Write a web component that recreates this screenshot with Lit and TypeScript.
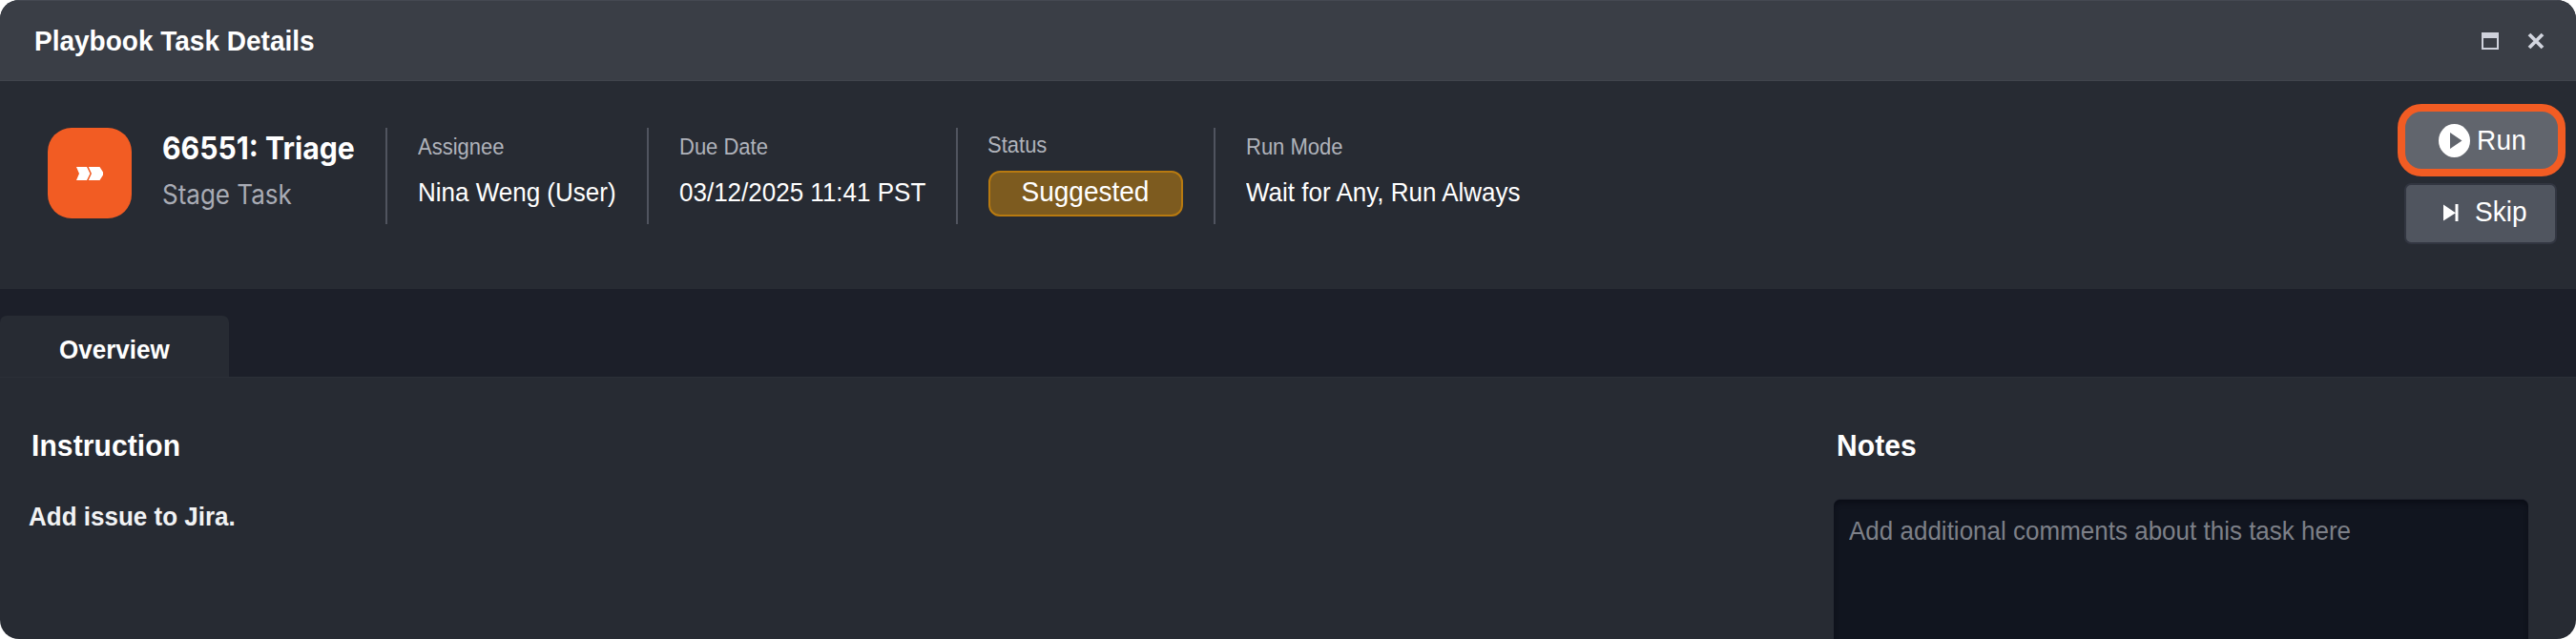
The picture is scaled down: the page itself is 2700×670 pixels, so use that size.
import { LitElement, html, css } from "lit";
import { customElement, property } from "lit/decorators.js";

/** Labelled value in the task summary strip. */
@customElement("task-field")
class TaskField extends LitElement {
  @property() label = "";
  static styles = css`
    :host {
      display: block;
      box-sizing: border-box;
      height: 101px;
      border-left: 2px solid #50545f;
      padding: 6px 0 0 32px;
      white-space: nowrap;
    }
    .label {
      font-size: 22px;
      line-height: 30px;
      color: #b0b3bb;
      transform: scaleY(1.07);
    }
    .value {
      margin-top: 16px;
      font-size: 26px;
      line-height: 30px;
      color: #fff;
      transform: scaleY(1.07);
    }
    :host([badge]) {
      padding-top: 4px;
      padding-left: 31px;
    }
    :host([badge]) .value {
      margin-top: 0;
      transform: none;
    }
  `;
  render() {
    return html`<div class="label">${this.label}</div>
      <div class="value"><slot></slot></div>`;
  }
}

@customElement("app-root")
class AppRoot extends LitElement {
  static styles = css`
    :host {
      display: block;
      width: 2700px;
      height: 670px;
      background: #fff;
      font-family: "Liberation Sans", Arial, sans-serif;
      color: #fff;
    }
    * {
      box-sizing: border-box;
    }
    svg {
      display: block;
      flex: none;
    }
    .dialog {
      display: flex;
      flex-direction: column;
      height: 670px;
      border-radius: 20px;
      overflow: hidden;
      background: #272b33;
      white-space: nowrap;
    }
    .tall {
      display: block;
      transform: scaleY(1.07);
    }
    .titlebar {
      flex: none;
      display: flex;
      align-items: center;
      justify-content: space-between;
      height: 85px;
      padding: 0 33px 0 36px;
      background: #3a3e46;
      border-top: 1px solid #454952;
      border-bottom: 1px solid #41454d;
    }
    .title {
      font-size: 28px;
      line-height: 34px;
      font-weight: 700;
    }
    .window-actions {
      display: flex;
      gap: 30px;
    }
    .summary {
      flex: none;
      display: flex;
      height: 218px;
      padding: 49px 11px 0 50px;
    }
    .badge-icon {
      display: flex;
      align-items: center;
      justify-content: center;
      width: 88px;
      height: 95px;
      border-radius: 25px;
      background: #f25c23;
    }
    .heading {
      width: 236px;
      padding: 4px 0 0 2px;
      margin-left: 30px;
      font-family: Inter, sans-serif;
    }
    .task-name {
      font-size: 30.2px;
      line-height: 34px;
      font-weight: 700;
    }
    .task-kind {
      margin-top: 15px;
      font-size: 26px;
      line-height: 34px;
      color: #a9acb5;
    }
    .assignee {
      width: 274px;
    }
    .due {
      width: 324px;
    }
    .status {
      width: 270px;
    }
    .pill {
      display: flex;
      align-items: center;
      justify-content: center;
      width: 204px;
      height: 48px;
      margin: 11px 0 0 1px;
      padding: 0 1px 4px 0;
      border: 2px solid #b87a10;
      border-radius: 12px;
      background: #7d5b1f;
      font-size: 28px;
    }
    .actions {
      display: flex;
      flex-direction: column;
      align-items: flex-start;
      gap: 7px;
      width: 176px;
      margin: -25px 0 0 auto;
    }
    .button {
      display: flex;
      align-items: center;
      font-size: 28px;
      line-height: 34px;
    }
    .run {
      width: 176px;
      height: 76px;
      padding-left: 35px;
      gap: 7px;
      border: 8px solid #f25c23;
      border-radius: 25px;
      background: #61656d;
      letter-spacing: 0.2px;
    }
    .skip {
      width: 160px;
      height: 64px;
      margin-left: 7px;
      padding: 0 0 4px 39px;
      gap: 17px;
      border: 2px solid #323641;
      border-radius: 7px;
      background: #50555f;
    }
    .skip svg {
      transform: translateY(1px);
    }
    .tabs {
      flex: none;
      display: flex;
      align-items: flex-end;
      height: 92px;
      background: #1c1f29;
    }
    .tab {
      width: 240px;
      height: 64px;
      padding: 19px 0 0 62px;
      border-radius: 7px 7px 0 0;
      background: #272b33;
      font-size: 26px;
      line-height: 32px;
      font-weight: 700;
    }
    .content {
      flex: 1;
      display: grid;
      grid-template-columns: 1922px 728px;
      min-height: 0;
      border-top: 1px solid #2b2f38;
    }
    .section-title {
      font-size: 30px;
      line-height: 36px;
      font-weight: 700;
      padding-top: 53px;
      margin: 0;
      letter-spacing: 0.1px;
    }
    .instruction .section-title {
      padding-left: 33px;
    }
    .notes .section-title {
      padding-left: 3px;
    }
    .instruction-text {
      margin-top: 40px;
      padding-left: 30px;
      font-size: 26px;
      line-height: 32px;
      font-weight: 700;
      color: #f1f2f4;
    }
    .comment {
      height: 160px;
      margin-top: 39px;
      padding: 16px 16px;
      border-radius: 7px;
      background: #11151f;
      box-shadow: inset 0 4px 6px -2px #090c14, 0 -1px 0 #1f222c;
      font-size: 26px;
      line-height: 32px;
      color: #7d8088;
    }
  `;
  render() {
    return html`
      <div class="dialog">
        <header class="titlebar">
          <span class="title tall">Playbook Task Details</span>
          <div class="window-actions">
            <svg width="18" height="18" viewBox="0 0 18 18">
              <path fill="#cfd2dc" fill-rule="evenodd" d="M0 0H18V18H0ZM2 6V16H16V6Z" />
            </svg>
            <svg width="18" height="18" viewBox="0 0 18 18">
              <path stroke="#d2d5df" stroke-width="3.8" d="M2 2L16 16M16 2L2 16" />
            </svg>
          </div>
        </header>

        <section class="summary">
          <div class="badge-icon">
            <svg width="28" height="14" viewBox="0 0 28 14">
              <path fill="#fff" d="M0 0H11L14.4 7L11 14H0L3 7ZM12.8 0H24.5L28 5.5V8.5L24.5 14H12.8L16 7Z" />
            </svg>
          </div>
          <div class="heading">
            <div class="task-name tall">66551: Triage</div>
            <div class="task-kind tall">Stage Task</div>
          </div>
          <task-field class="assignee" label="Assignee">Nina Weng (User)</task-field>
          <task-field class="due" label="Due Date">03/12/2025 11:41 PST</task-field>
          <task-field class="status" label="Status" badge>
            <div class="pill"><span class="tall">Suggested</span></div>
          </task-field>
          <task-field label="Run Mode">Wait for Any, Run Always</task-field>
          <div class="actions">
            <div class="button run">
              <svg width="33" height="35" viewBox="0 0 33 35">
                <ellipse cx="16.5" cy="17.5" rx="16.5" ry="17.5" fill="#fff" />
                <path fill="#61656d" d="M12 9L24.5 17.5L12 26Z" />
              </svg>
              <span class="tall">Run</span>
            </div>
            <div class="button skip">
              <svg width="16" height="18" viewBox="0 0 16 18">
                <path fill="#fff" d="M0 .5L12.5 9V0H15.5V18H12.5V9.5L0 17.5Z" />
              </svg>
              <span class="tall">Skip</span>
            </div>
          </div>
        </section>

        <nav class="tabs">
          <div class="tab"><span class="tall">Overview</span></div>
        </nav>

        <main class="content">
          <section class="instruction">
            <h2 class="section-title"><span class="tall">Instruction</span></h2>
            <div class="instruction-text tall">Add issue to Jira.</div>
          </section>
          <section class="notes">
            <h2 class="section-title"><span class="tall">Notes</span></h2>
            <div class="comment"><span class="tall">Add additional comments about this task here</span></div>
          </section>
        </main>
      </div>
    `;
  }
}
